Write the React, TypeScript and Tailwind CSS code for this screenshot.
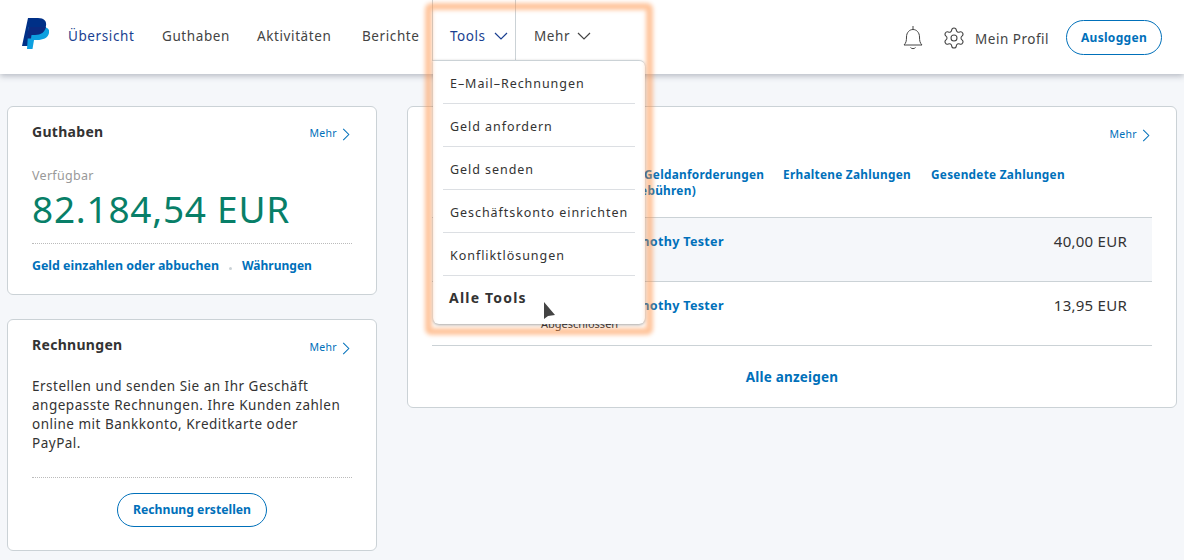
import React from "react";
import { Settings } from "lucide-react";

const navItems = [
  { label: "Übersicht", className: "w-[94px] text-[#1a3f91]" },
  { label: "Guthaben", className: "w-[95px] text-[#444]" },
  { label: "Aktivitäten", className: "w-[105px] text-[#444]" },
  { label: "Berichte", className: "w-[70px] text-[#444]" },
];

const toolLinks = ["E–Mail–Rechnungen", "Geld anfordern", "Geld senden", "Geschäftskonto einrichten", "Konfliktlösungen"];

const Chevron = ({ className }: { className: string }) => (
  <svg viewBox="0 0 14 8" fill="none" stroke="currentColor" strokeWidth="1.2" className={className}>
    <path d="M1 1l6 6 6-6" />
  </svg>
);

const MoreLink = () => (
  <a className="flex items-center gap-[5px] pr-[2px] text-[10.500px] tracking-[0.3px] text-[#0070ba]">
    Mehr
    <svg viewBox="0 0 8 14" fill="none" stroke="currentColor" strokeWidth="1.1" className="mt-[2px] h-[13px] w-[8px]">
      <path d="M1 1l6 6-6 6" />
    </svg>
  </a>
);

const PayPalLogo = () => (
  <svg viewBox="0 0 27 31" className="h-[31px] w-[27px]">
    <path fill="#003087" d="M6 0H16C22 0 25 3 24 8C23 14 19 17 13 17H9.500L8 28H0Z" />
    <path fill="#0da0e0" d="M6.500 9H20C25 9 28 11 27 15C26 20 21 22 15 22H12L10.500 31H5Z" />
    <path fill="#0b2a80" d="M6.500 9H24C23 14 19 17 13 17H9.500L9 20.500H5.200Z" />
  </svg>
);

const Row = ({ shaded, amount, status }: { shaded?: boolean; amount: string; status: string }) => (
  <div className={`flex h-[64px] items-start border-b border-[#cbd2d6] pr-[25px] ${shaded ? "bg-[#f5f7fa]" : "bg-white"}`}>
    <div className="ml-[109px] mt-[15px] w-[300px]">
      <div className="text-[12.600px] font-bold leading-[18px] tracking-[0.3px] text-[#0070ba]">Zahlung von Timothy Tester</div>
      <div className="mt-[2px] text-[11px] leading-[14px] text-[#333]">{status}</div>
    </div>
    <div className="ml-auto mt-[13px] text-[15px] leading-[20px] tracking-[0.25px] text-[#333]">{amount}</div>
  </div>
);

export default function App() {
  return (
    <div className="relative h-[560px] w-[1184px] overflow-hidden bg-[#f5f7fa] font-['Noto_Sans',sans-serif]">
      {/* Header */}
      <header className="flex h-[74px] items-start bg-white shadow-[0_2px_6px_rgba(60,70,90,0.35)]">
        <div className="ml-[22px] mt-[18px] w-[46px]">
          <PayPalLogo />
        </div>
        <nav className="flex h-[61px] items-start">
          {navItems.map((item) => (
            <a key={item.label} className={`mt-[26px] text-[13.500px] leading-[20px] tracking-[0.6px] ${item.className}`}>
              {item.label}
            </a>
          ))}
          <div className="flex h-[61px] w-[84px] items-start border-x border-[#cbd2d6] pl-[17px] pt-[26px] text-[#1a3f91]">
            <span className="text-[13.500px] leading-[20px] tracking-[0.5px]">Tools</span>
            <Chevron className="ml-[9px] mt-[6px] h-[8px] w-[14px]" />
          </div>
          <div className="flex h-[61px] items-start pl-[18px] pt-[26px] text-[#444]">
            <span className="text-[13.500px] leading-[20px] tracking-[0.6px]">Mehr</span>
            <Chevron className="ml-[7px] mt-[6px] h-[8px] w-[14px]" />
          </div>
        </nav>
        <div className="ml-auto mr-[22px] mt-[20px] flex items-center text-[#444]">
          <svg viewBox="0 0 22 26" fill="none" stroke="currentColor" strokeWidth="1" className="h-[26px] w-[22px]">
            <path d="M11 1v3M2 20c2-2 2.500-4 2.500-8 0-4.500 3-7.500 6.500-7.500s6.500 3 6.500 7.500c0 4 .5 6 2.500 8zM8.500 22.500c1 1.500 4 1.500 5 0" />
          </svg>
          <Settings className="ml-[18px] h-[24px] w-[24px]" strokeWidth={1.05} />
          <span className="ml-[9px] mt-[3px] whitespace-nowrap text-[13.500px] tracking-[0.5px]">Mein Profil</span>
          <button className="ml-[17px] h-[35px] w-[96px] rounded-full border border-[#0070ba] text-[12px] font-bold tracking-[0.3px] text-[#0070ba]">
            Ausloggen
          </button>
        </div>
      </header>

      {/* Main */}
      <main className="flex items-start gap-[30px] pl-[7px] pt-[32px]">
        <div className="flex w-[370px] flex-col gap-[24px]">
          <section className="h-[189px] rounded-[6px] border border-[#cbd2d6] bg-white px-[24px] pt-[15px]">
            <div className="flex items-start justify-between">
              <h2 className="text-[14px] font-bold leading-[20px] tracking-[0.3px] text-[#333]">Guthaben</h2>
              <div className="mt-[4px]"><MoreLink /></div>
            </div>
            <p className="mt-[25px] text-[12.500px] leading-[18px] tracking-[0.3px] text-[#999]">Verfügbar</p>
            <p className="mt-[2px] text-[37px] leading-[44px] tracking-[0.75px] text-[#087f68]">82.184,54 EUR</p>
            <div className="mt-[12px] border-t border-dotted border-[#bbb]" />
            <div className="mt-[13px] flex items-center text-[12.400px] font-bold leading-[18px] text-[#0070ba]">
              <a>Geld einzahlen oder abbuchen</a>
              <span className="mx-[10px] mt-[5px] h-[3px] w-[3px] rounded-full bg-[#cbd2d6]" />
              <a className="text-[12px]">Währungen</a>
            </div>
          </section>

          <section className="h-[232px] rounded-[6px] border border-[#cbd2d6] bg-white px-[24px] pt-[15px]">
            <div className="flex items-start justify-between">
              <h2 className="text-[14px] font-bold leading-[20px] tracking-[0.3px] text-[#333]">Rechnungen</h2>
              <div className="mt-[5px]"><MoreLink /></div>
            </div>
            <p className="mt-[21px] pr-[4px] text-[13.500px] leading-[19px] tracking-[0.5px] text-[#333]">
              Erstellen und senden Sie an Ihr Geschäft angepasste Rechnungen. Ihre Kunden zahlen online mit Bankkonto, Kreditkarte oder PayPal.
            </p>
            <div className="mt-[24px] border-t border-dotted border-[#bbb]" />
            <div className="mt-[15px] flex justify-center">
              <button className="h-[34px] w-[150px] rounded-full border border-[#0070ba] text-[12.200px] font-bold text-[#0070ba]">
                Rechnung erstellen
              </button>
            </div>
          </section>
        </div>

        <section className="h-[302px] w-[770px] rounded-[6px] border border-[#cbd2d6] bg-white px-[24px]">
          <div className="flex justify-end pt-[20px]">
            <MoreLink />
          </div>
          <div className="ml-[212px] mt-[23px] flex h-[51px] items-start gap-[20px] text-[11.800px] font-bold leading-[16px] tracking-[0.28px] text-[#0070ba]">
            <a className="w-[119px] whitespace-nowrap">
              Geldanforderungen
              <span className="-ml-[17px] block">(Gebühren)</span>
            </a>
            <a>Erhaltene Zahlungen</a>
            <a>Gesendete Zahlungen</a>
          </div>
          <div className="border-t border-[#cbd2d6]">
            <Row shaded amount="40,00 EUR" status="Abgeschlossen" />
            <Row amount="13,95 EUR" status="Abgeschlossen" />
          </div>
          <div className="mt-[21px] text-center text-[13.500px] font-bold leading-[20px] tracking-[0.2px] text-[#0070ba]">Alle anzeigen</div>
        </section>
      </main>

      {/* Tools dropdown */}
      <div className="absolute left-[433px] top-[60px] w-[212px] rounded-b-[6px] rounded-tr-[6px] border-t border-[#cbd2d6] bg-white px-[10px] shadow-[0_1px_3px_rgba(0,0,0,0.35)]">
        {toolLinks.map((link) => (
          <div key={link} className="flex h-[43px] items-center whitespace-nowrap border-b border-[#dcdfe3] pl-[7px] pt-[4px] text-[12.500px] tracking-[0.95px] text-[#333]">
            {link}
          </div>
        ))}
        <div className="flex h-[48px] items-start pl-[6px] pt-[11px] text-[14px] font-bold tracking-[1.2px] text-[#333]">Alle Tools</div>
      </div>

      {/* Highlight frame */}
      <div className="pointer-events-none absolute left-[425px] top-[3px] h-[332px] w-[228px] rounded-[6px] border-[7px] border-[#ff8c3a]/50 blur-[2px]" />

      {/* Mouse cursor */}
      <svg viewBox="0 0 14 22" className="absolute left-[543px] top-[301px] h-[22px] w-[14px]">
        <path fill="#444" d="M1 1v17l4-3 7-1z" />
      </svg>
    </div>
  );
}
